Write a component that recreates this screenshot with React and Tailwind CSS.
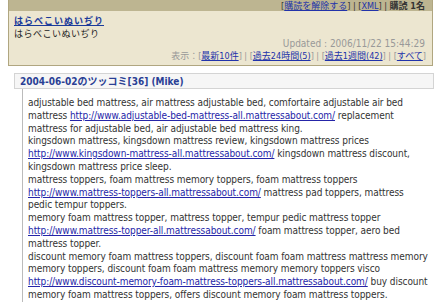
import React from "react";

const body = [
  { t: "adjustable bed mattress, air mattress adjustable bed, comfortaire adjustable air bed mattress " },
  { a: "http://www.adjustable-bed-mattress-all.mattressabout.com/" },
  { t: " replacement mattress for adjustable bed, air adjustable bed mattress king." },
  { br: true },
  { t: "kingsdown mattress, kingsdown mattress review, kingsdown mattress prices " },
  { a: "http://www.kingsdown-mattress-all.mattressabout.com/" },
  { t: " kingsdown mattress discount, kingsdown mattress price sleep." },
  { br: true },
  { t: "mattress toppers, foam mattress memory toppers, foam mattress toppers " },
  { a: "http://www.mattress-toppers-all.mattressabout.com/" },
  { t: " mattress pad toppers, mattress pedic tempur toppers." },
  { br: true },
  { t: "memory foam mattress topper, mattress topper, tempur pedic mattress topper " },
  { a: "http://www.mattress-topper-all.mattressabout.com/" },
  { t: " foam mattress topper, aero bed mattress topper." },
  { br: true },
  { t: "discount memory foam mattress toppers, discount foam foam mattress mattress memory memory toppers, discount foam foam mattress memory memory toppers visco " },
  { a: "http://www.discount-memory-foam-mattress-toppers-all.mattressabout.com/" },
  { t: " buy discount memory foam mattress toppers, offers discount memory foam mattress toppers." },
];

export default function App() {
  return (
    <div
      className="w-[440px] h-[302px] overflow-hidden bg-white text-[#333]"
      style={{ fontFamily: '"DejaVu Sans Condensed", "DejaVu Sans", "Noto Sans CJK JP", sans-serif' }}
    >
      {/* antenna panel */}
      <div className="ml-[8px] w-[425px] bg-[#ece6d0] border-l border-b border-r border-[#b0a680]">
        <div className="h-[11px] bg-[#bdb591] flex items-end justify-end pr-[7px] text-[9px] leading-[10px] text-[#333]">
          <span>
            [<a className="text-[#2233aa] underline">購読を解除する</a>] | [<a className="text-[#2233aa] underline">XML</a>] |{" "}
            <b>購読 1名</b>
          </span>
        </div>
        <div className="px-[5px] pt-[5px]">
          <a className="block w-fit text-[9px] leading-[11px] font-bold text-[#1a3a9a] underline tracking-[1px]">はらべこいぬいぢり</a>
          <div className="mt-[2px] text-[9px] leading-[11px] tracking-[0.5px] text-[#222]">はらべこいぬいぢり</div>
        </div>
        <div className="-mt-[2px] pr-[7px] text-right text-[10px] leading-[12px] text-[#999]">Updated : 2006/11/22 15:44:29</div>
        <div className="pr-[6px] pb-[3px] text-right text-[9px] leading-[12px] text-[#999]">
          表示：[<a className="text-[#2233aa] underline">最新10件</a>] | [<a className="text-[#2233aa] underline">過去24時間(5)</a>] | [
          <a className="text-[#2233aa] underline">過去1週間(42)</a>] | [<a className="text-[#2233aa] underline">すべて</a>]
        </div>
      </div>

      {/* comment */}
      <div className="ml-[14px] mt-[7px] w-[420px]">
        <div className="h-[16px] border border-[#d4d4d4] bg-[#f6f6f6] pl-[5px] flex items-center text-[10px] font-bold text-[#2a3f95]">
          2004-06-02のツッコミ[36] (Mike)
        </div>
        <div className="ml-[8px] border-l border-[#bbb] pl-[5px] pt-[8px] pr-[4px] text-[10px] leading-[12.8px] tracking-[-0.07px] text-[#333]">
          {body.map((p, i) =>
            p.br ? (
              <br key={i} />
            ) : p.a ? (
              <a key={i} className="text-[#2525a8] underline">
                {p.a}
              </a>
            ) : (
              <span key={i}>{p.t}</span>
            )
          )}
        </div>
      </div>
    </div>
  );
}
